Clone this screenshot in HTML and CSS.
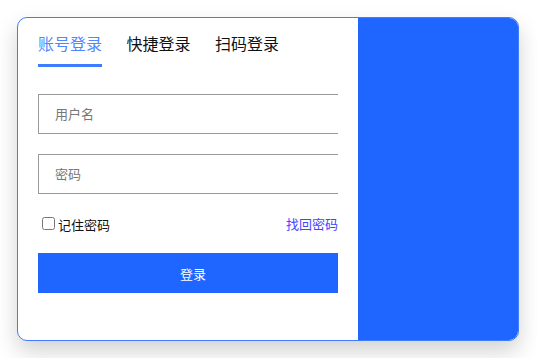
FILE: index.html
```html
<!DOCTYPE html>
<html lang="zh-CN">
<head>
  <meta charset="UTF-8">
  <title>登录</title>
  <link rel="stylesheet" href="styles.css">
</head>
<body>
  <div class="card">
    <!-- 左侧表单 -->
    <div class="form-side">
      <div class="tabs">
        <span class="tab active">账号登录</span>
        <span class="tab">快捷登录</span>
        <span class="tab">扫码登录</span>
      </div>
      <div class="form-body">
        <input class="field" type="text" placeholder="用户名">
        <input class="field" type="password" placeholder="密码">
        <div class="options">
          <label class="remember"><input type="checkbox">记住密码</label>
          <a class="forgot" href="#">找回密码</a>
        </div>
        <button class="submit">登录</button>
      </div>
    </div>
    <!-- 右侧蓝色面板 -->
    <div class="side-panel"></div>
  </div>
</body>
</html>
```

FILE: styles.css
```css
* {
  margin: 0;
  padding: 0;
  box-sizing: border-box;
}
body {
  padding: 17px;
  background: #fff;
  font-family: "Noto Sans CJK SC", "Noto Sans", sans-serif;
}

.card {
  display: flex;
  width: 502px;
  height: 324px;
  border: 1px solid #3f7cff;
  border-radius: 10px;
  overflow: hidden;
  background: #fff;
  box-shadow: 0 10px 22px rgba(0, 0, 0, 0.18);
}

.form-side {
  width: 340px;
  padding: 13px 20px 0;
}

/* 标签 */
.tabs {
  display: flex;
  gap: 24.5px;
  margin-bottom: 27px;
}
.tab {
  font-size: 16px;
  line-height: 24px;
  padding-bottom: 9px;
  border-bottom: 3px solid transparent;
  color: #111;
}
.tab.active {
  color: #4d88ff;
  border-bottom-color: #3f7cff;
}

/* 表单主体，超出部分被裁掉 */
.form-body {
  width: 300px;
  overflow: hidden;
}

.field {
  display: block;
  width: 334px;
  height: 40px;
  border: 1px solid #999;
  padding: 0 16px 2px;
  font-size: 13px;
  font-family: inherit;
  margin-bottom: 20px;
  outline: none;
}
.field::placeholder {
  color: #777;
}

.options {
  display: flex;
  justify-content: space-between;
  align-items: center;
  height: 20px;
  font-size: 13px;
}
.remember {
  display: flex;
  align-items: center;
  color: #111;
}
.remember input {
  width: 13px;
  height: 13px;
  margin: 0 3px 2px 4px;
}
.forgot {
  color: #4444ff;
  text-decoration: none;
  margin-bottom: 2px;
}

.submit {
  display: block;
  width: 310px;
  height: 40px;
  margin-top: 19px;
  border: none;
  background: #1e66ff;
  color: #fff;
  font-size: 13px;
  font-family: inherit;
}

.side-panel {
  flex: 1;
  background: #1e66ff;
}
```
